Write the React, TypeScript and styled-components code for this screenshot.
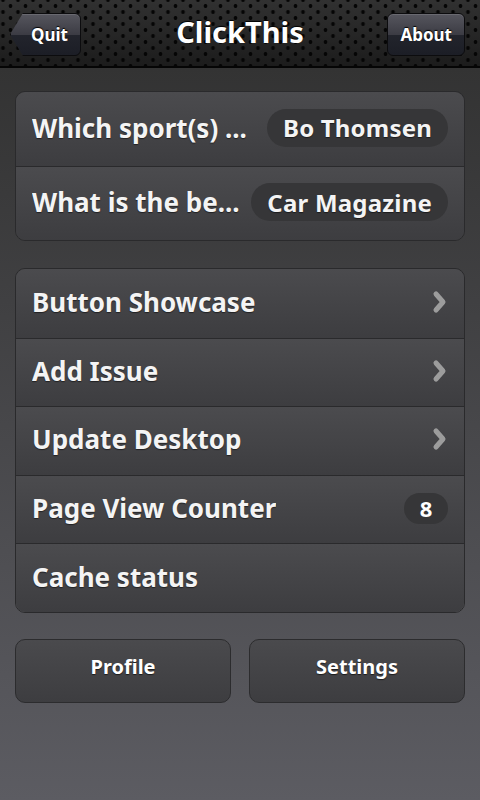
import React from 'react'
import styled, { createGlobalStyle } from 'styled-components'

const GlobalStyle = createGlobalStyle`
  html, body {
    margin: 0;
    padding: 0;
    background: #333;
  }
  body {
    font-family: "Noto Sans", "Open Sans", "DejaVu Sans", sans-serif;
  }
`

const Screen = styled.div`
  width: 480px;
  height: 800px;
  display: flex;
  flex-direction: column;
  overflow: hidden;
`

const Header = styled.header`
  height: 68px;
  flex-shrink: 0;
  box-sizing: border-box;
  padding: 3px 15px 0 10px;
  border-bottom: 2px solid #050505;
  display: flex;
  align-items: center;
  justify-content: space-between;
  position: relative;
  background-color: #222;
  background-image:
    radial-gradient(circle, #050505 1.6px, transparent 2.2px),
    radial-gradient(circle, #050505 1.6px, transparent 2.2px),
    linear-gradient(#313131, #1c1c1c);
  background-size: 15px 12px, 15px 12px, 100% 100%;
  background-position: 3px 0px, 10.5px 6px, 0 0;
`

const Title = styled.h1`
  position: absolute;
  left: 0;
  right: 0;
  top: 0;
  bottom: 4px;
  margin: 0;
  display: flex;
  align-items: center;
  justify-content: center;
  font-size: 29px;
  font-weight: 700;
  color: #fff;
  text-shadow: 0 -1px 1px #000;
  pointer-events: none;
`

const NavButton = styled.button<{ $back?: boolean }>`
  position: relative;
  z-index: 1;
  height: 43px;
  padding: ${p => (p.$back ? '0 12px 0 20px' : '0 12px')};
  min-width: ${p => (p.$back ? '70px' : '76px')};
  border: 1px solid #0c0c0e;
  border-radius: ${p => (p.$back ? '0 6px 6px 0' : '6px')};
  clip-path: ${p =>
    p.$back ? 'polygon(13px 0, 100% 0, 100% 100%, 13px 100%, 0 50%)' : 'none'};
  background: linear-gradient(
    #56565e 0%,
    #3c3c44 50%,
    #22242c 51%,
    #1c1e26 100%
  );
  box-shadow: inset 0 1px 0 rgba(255, 255, 255, 0.12);
  color: #fff;
  font-family: inherit;
  font-size: 17px;
  font-weight: 700;
  text-shadow: 0 -1px 1px #000;
  cursor: pointer;
`

const Body = styled.main`
  flex: 1;
  display: flex;
  flex-direction: column;
  gap: 27px;
  padding: 23px 15px 0;
  background: linear-gradient(#333333, #5c5c62);
`

const Card = styled.section`
  border: 1px solid #2a2a2c;
  border-radius: 10px;
  overflow: hidden;
  display: flex;
  flex-direction: column;
`

const Row = styled.div<{ $h: number }>`
  height: ${p => p.$h}px;
  display: flex;
  align-items: center;
  justify-content: space-between;
  gap: 10px;
  padding: 0 16px 3px 16px;
  background: linear-gradient(#4b4b4e, #3d3d40);
  border-top: 1px solid #2a2a2c;
  box-sizing: border-box;
  &:first-child {
    border-top: none;
  }
`

const Label = styled.span`
  font-size: 26px;
  font-weight: 700;
  color: #f4f4f4;
  white-space: nowrap;
  overflow: hidden;
  text-overflow: ellipsis;
  text-shadow: 0 1px 1px rgba(0, 0, 0, 0.5);
`

const Pill = styled.span`
  flex-shrink: 0;
  height: 38px;
  padding: 0 16px;
  border-radius: 19px;
  background: #363638;
  display: flex;
  align-items: center;
  font-size: 24px;
  font-weight: 700;
  color: #f4f4f4;
  text-shadow: 0 1px 1px rgba(0, 0, 0, 0.5);
  letter-spacing: 0.2px;
`

const Badge = styled.span`
  height: 31px;
  min-width: 44px;
  border-radius: 16px;
  background: #363638;
  display: flex;
  align-items: center;
  justify-content: center;
  font-size: 22px;
  font-weight: 700;
  color: #fff;
`

const Buttons = styled.div`
  margin-top: -1px;
  display: grid;
  grid-template-columns: 1fr 1fr;
  gap: 18px;
`

const ActionButton = styled.button`
  height: 64px;
  border: 1px solid #2c2c2e;
  border-radius: 10px;
  background: linear-gradient(#4a4a4d, #3d3d40);
  color: #fff;
  font-family: inherit;
  font-size: 20px;
  font-weight: 700;
  text-shadow: 0 1px 1px rgba(0, 0, 0, 0.6);
  padding: 0 0 9px;
  cursor: pointer;
`

const Chevron = () => (
  <svg width="16" height="24" viewBox="0 0 16 24" style={{ flexShrink: 0 }}>
    <path
      d="M4 4 L11 12 L4 20"
      fill="none"
      stroke="#9c9c9c"
      strokeWidth="5"
      strokeLinejoin="round"
      strokeLinecap="round"
    />
  </svg>
)

const menu: { label: string; chevron?: boolean; count?: number }[] = [
  { label: 'Button Showcase', chevron: true },
  { label: 'Add Issue', chevron: true },
  { label: 'Update Desktop', chevron: true },
  { label: 'Page View Counter', count: 8 },
  { label: 'Cache status' },
]

export default function App() {
  return (
    <Screen>
      <GlobalStyle />
      <Header>
        <NavButton $back>Quit</NavButton>
        <Title>ClickThis</Title>
        <NavButton>About</NavButton>
      </Header>
      <Body>
        <Card>
          <Row $h={74}>
            <Label>Which sport(s) ...</Label>
            <Pill>Bo Thomsen</Pill>
          </Row>
          <Row $h={74}>
            <Label>What is the be...</Label>
            <Pill>Car Magazine</Pill>
          </Row>
        </Card>
        <Card>
          {menu.map(item => (
            <Row $h={68.6} key={item.label}>
              <Label>{item.label}</Label>
              {item.chevron && <Chevron />}
              {item.count !== undefined && <Badge>{item.count}</Badge>}
            </Row>
          ))}
        </Card>
        <Buttons>
          <ActionButton>Profile</ActionButton>
          <ActionButton>Settings</ActionButton>
        </Buttons>
      </Body>
    </Screen>
  )
}
